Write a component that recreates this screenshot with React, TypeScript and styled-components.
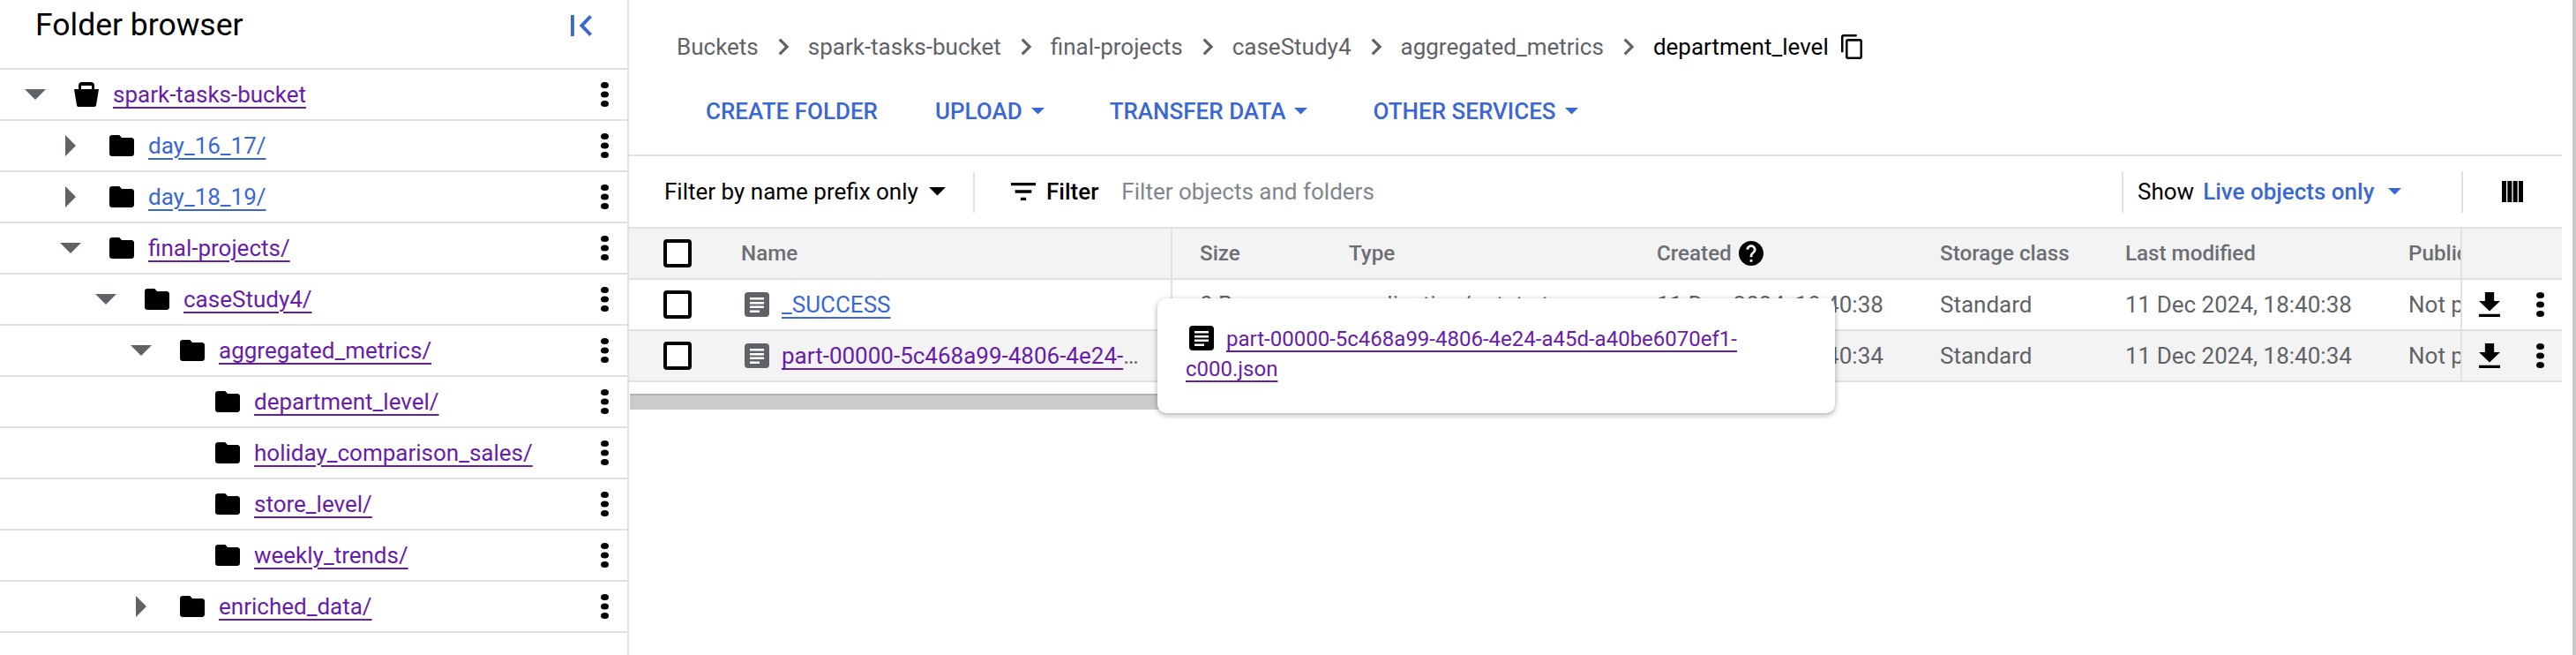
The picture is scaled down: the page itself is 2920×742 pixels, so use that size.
import React from 'react';
import styled, { createGlobalStyle } from 'styled-components';

const PURPLE = '#681da8';
const BLUE = '#3b67d3';
const GREY = '#5f6368';
const LINE = '#e0e0e0';
const COLUMNS = '127px 487px 202px 349px 321px 210px 321px 59px 115px';

const GlobalStyle = createGlobalStyle`
  html, body {
    margin: 0;
    padding: 0;
    height: 100%;
    overflow: hidden;
    background: #fff;
    font-family: Roboto, "Liberation Sans", sans-serif;
    font-size: 26px;
  }
  #root {
    height: 100%;
  }
`;

const Page = styled.div`
  display: flex;
  height: 742px;
  width: 2920px;
  overflow: hidden;
`;

const Sidebar = styled.aside`
  width: 713px;
  flex: none;
  box-sizing: border-box;
  border-right: 2px solid ${LINE};
`;

const SidebarHeader = styled.div`
  height: 79px;
  box-sizing: border-box;
  border-bottom: 2px solid ${LINE};
  display: flex;
  justify-content: space-between;
  padding: 8px 40px 0 40px;
`;

const SidebarTitle = styled.h2`
  margin: 0;
  font-size: 35.5px;
  font-weight: 400;
  line-height: 40px;
  color: #000;
`;

const CollapseIcon = styled.svg`
  margin-top: 9px;
`;

const TreeRow = styled.div<{ $level: number }>`
  height: 58px;
  box-sizing: border-box;
  border-bottom: 2px solid ${LINE};
  display: flex;
  align-items: center;
  padding: 0 21px 0 ${(p) => 28 + p.$level * 40}px;
`;

const Expander = styled.span`
  width: 56px;
  flex: none;
  display: flex;
`;

const ExpanderBox = styled.span`
  width: 24px;
  height: 24px;
  display: flex;
  align-items: center;
  justify-content: center;
`;

const TreeLabel = styled.div`
  flex: 1;
  margin-left: 16px;
  display: flex;
  min-width: 0;
`;

const TextLink = styled.a<{ $visited?: boolean }>`
  color: ${(p) => (p.$visited ? PURPLE : BLUE)};
  text-decoration: underline;
  text-decoration-thickness: 2px;
  text-underline-offset: 5px;
  line-height: 34px;
`;

const Main = styled.main`
  position: relative;
  flex: 1;
  min-width: 0;
  padding-right: 12px;
  box-sizing: border-box;
  border-right: 4px solid #c8c8c8;
`;

const Breadcrumb = styled.nav`
  height: 106px;
  padding-left: 54px;
  display: flex;
  align-items: center;
  color: ${GREY};
`;

const Chevron = styled.span`
  width: 56px;
  flex: none;
  display: flex;
  justify-content: center;
`;

const CurrentCrumb = styled.span`
  color: #000;
`;

const CopyButton = styled.span`
  display: flex;
  margin-left: 14px;
`;

const Toolbar = styled.div`
  height: 71px;
  box-sizing: border-box;
  padding: 0 0 30px 87px;
  display: flex;
  align-items: center;
  gap: 65px;
  border-bottom: 2px solid ${LINE};
`;

const ToolButton = styled.span<{ $menu?: boolean }>`
  display: flex;
  align-items: center;
  color: ${BLUE};
  font-weight: 500;
  gap: 10px;
  padding-right: ${(p) => (p.$menu ? 9 : 0)}px;
`;

const FilterRow = styled.div`
  height: 80px;
  padding-right: 44px;
  display: flex;
  align-items: center;
`;

const PrefixSelect = styled.div`
  width: 390px;
  flex: none;
  box-sizing: border-box;
  padding-left: 40px;
  display: flex;
  align-items: center;
  gap: 12px;
  color: #000;
`;

const Divider = styled.span`
  width: 2px;
  height: 47px;
  flex: none;
  background: ${LINE};
`;

const FilterButton = styled.span`
  display: flex;
  align-items: center;
  gap: 12px;
  margin-left: 41px;
  font-weight: 500;
  color: #000;
`;

const FilterPlaceholder = styled.span`
  flex: 1;
  margin-left: 26px;
  color: #80868b;
`;

const ShowSelect = styled.div`
  width: 383px;
  flex: none;
  box-sizing: border-box;
  padding-left: 16px;
  display: flex;
  align-items: center;
  color: #000;
`;

const ShowValue = styled.span`
  color: ${BLUE};
  font-weight: 500;
  margin: 0 16px 0 10px;
`;

const ColumnsButton = styled.span`
  display: flex;
  margin-left: 44px;
`;

const Table = styled.div`
  border-top: 2px solid ${LINE};
  color: ${GREY};
`;

const Row = styled.div<{ $shaded?: boolean }>`
  display: grid;
  grid-template-columns: ${COLUMNS};
  height: 58px;
  box-sizing: border-box;
  border-bottom: 2px solid ${LINE};
  background: ${(p) => (p.$shaded ? '#f3f3f3' : '#fff')};
`;

const Cell = styled.div<{ $divided?: boolean; $pad?: number }>`
  display: flex;
  align-items: center;
  min-width: 0;
  overflow: hidden;
  white-space: nowrap;
  box-sizing: border-box;
  padding-left: ${(p) => p.$pad ?? 0}px;
  border-left: ${(p) => (p.$divided ? `2px solid ${LINE}` : 'none')};
`;

const HeaderCell = styled(Cell)`
  font-weight: 500;
  color: #6b6f73;
  font-size: 24.2px;
  gap: 8px;
`;

const NameCell = styled(Cell)`
  padding-left: 4px;
  padding-right: 31px;
  gap: 14px;

  svg {
    flex: none;
  }
`;

const Truncated = styled.span`
  overflow: hidden;
  text-overflow: ellipsis;
  white-space: nowrap;
  line-height: 36px;
  color: ${GREY};
`;

const ActionCell = styled(Cell)`
  border-left: 2px solid ${LINE};
  padding-left: 19px;
  gap: 41px;
`;

const Check = styled.span`
  width: 32px;
  height: 32px;
  box-sizing: border-box;
  border: 4px solid #000;
  border-radius: 4px;
  background: #fff;
  margin-left: 39px;
`;

const Scrollbar = styled.div`
  width: 700px;
  height: 18px;
  margin: 13px 0 0 1px;
  box-sizing: border-box;
  background: #cbcbcb;
  border-top: 2px solid #b4b4b4;
`;

const Tooltip = styled.div`
  position: absolute;
  left: 599px;
  top: 338px;
  width: 768px;
  height: 130px;
  box-sizing: border-box;
  padding: 29px 32px;
  background: #fff;
  border-radius: 10px;
  box-shadow: 0 2px 6px rgba(60, 64, 67, 0.45);
  font-size: 24px;
  line-height: 34px;
`;

const TooltipIcon = styled.span`
  display: inline-block;
  vertical-align: -5px;
  margin: 0 14px 0 4px;
  line-height: 0;
`;

const ArrowDown = ({ size = 24, color = GREY }: { size?: number; color?: string }) => (
  <svg width={size} height={size / 2} viewBox="0 0 10 5" fill={color}>
    <path d="M0 0h10L5 5z" />
  </svg>
);

const ArrowRight = () => (
  <svg width="12" height="24" viewBox="0 0 5 10" preserveAspectRatio="none" fill={GREY}>
    <path d="M0 0l5 5-5 5z" />
  </svg>
);

const Kebab = () => (
  <svg width="9" height="28" viewBox="0 0 9 28" fill="#000">
    <ellipse cx="4.5" cy="3.5" rx="4.5" ry="3.5" />
    <ellipse cx="4.5" cy="14" rx="4.5" ry="3.5" />
    <ellipse cx="4.5" cy="24.5" rx="4.5" ry="3.5" />
  </svg>
);

const FolderIcon = () => (
  <svg width="28" height="24" viewBox="2 4 20 16" preserveAspectRatio="none" fill="#000">
    <path d="M10 4H4c-1.1 0-1.99.9-1.99 2L2 18c0 1.1.9 2 2 2h16c1.1 0 2-.9 2-2V8c0-1.1-.9-2-2-2h-8l-2-2z" />
  </svg>
);

const BucketIcon = () => (
  <svg width="28" height="28" viewBox="0 0 28 28" fill="#000">
    <path
      fillRule="evenodd"
      d="M5 8V4a4 4 0 0 1 4-4h10a4 4 0 0 1 4 4v4h5L25 26a2 2 0 0 1-2 2H5a2 2 0 0 1-2-2L0 8zM8 8h12V5a1 1 0 0 0-1-1H9a1 1 0 0 0-1 1z"
    />
  </svg>
);

const FileIcon = ({ color = GREY }: { color?: string }) => (
  <svg width="28" height="28" viewBox="0 0 28 28">
    <rect width="28" height="28" rx="4" fill={color} />
    <path d="M6 6h16v2.400H6zM6 11h16v2.400H6zM6 15.500h16v2.400H6zM6 20.500h11v2.400H6z" fill="#fff" />
  </svg>
);

const ChevronIcon = () => (
  <svg width="38" height="38" viewBox="0 0 24 24" fill={GREY}>
    <path d="M10 6L8.590 7.410 13.170 12l-4.580 4.590L10 18l6-6z" />
  </svg>
);

const BlueCaret = () => <ArrowDown size={15} color={BLUE} />;

const treeRows = [
  { level: 0, state: 'open', icon: 'bucket', name: 'spark-tasks-bucket', visited: true },
  { level: 1, state: 'closed', icon: 'folder', name: 'day_16_17/', visited: false },
  { level: 1, state: 'closed', icon: 'folder', name: 'day_18_19/', visited: false },
  { level: 1, state: 'open', icon: 'folder', name: 'final-projects/', visited: true },
  { level: 2, state: 'open', icon: 'folder', name: 'caseStudy4/', visited: true },
  { level: 3, state: 'open', icon: 'folder', name: 'aggregated_metrics/', visited: true },
  { level: 4, state: 'none', icon: 'folder', name: 'department_level/', visited: true },
  { level: 4, state: 'none', icon: 'folder', name: 'holiday_comparison_sales/', visited: true },
  { level: 4, state: 'none', icon: 'folder', name: 'store_level/', visited: true },
  { level: 4, state: 'none', icon: 'folder', name: 'weekly_trends/', visited: true },
  { level: 3, state: 'closed', icon: 'folder', name: 'enriched_data/', visited: true },
];

const crumbs = ['Buckets', 'spark-tasks-bucket', 'final-projects', 'caseStudy4', 'aggregated_metrics'];

const files = [
  {
    name: '_SUCCESS',
    visited: false,
    created: '11 Dec 2024, 18:40:38',
    modified: '11 Dec 2024, 18:40:38',
  },
  {
    name: 'part-00000-5c468a99-4806-4e24-a45d-a40be6070ef1-c000.json',
    visited: true,
    created: '11 Dec 2024, 18:40:34',
    modified: '11 Dec 2024, 18:40:34',
  },
];

const App: React.FC = () => {
  return (
    <Page>
      <GlobalStyle />
      <Sidebar>
        <SidebarHeader>
          <SidebarTitle>Folder browser</SidebarTitle>
          <CollapseIcon width="24" height="24" viewBox="6 6 12.41 12" preserveAspectRatio="none" fill={BLUE}>
            <path d="M18.410 16.590L13.820 12l4.590-4.590L17 6l-6 6 6 6zM6 6h2v12H6z" />
          </CollapseIcon>
        </SidebarHeader>
        {treeRows.map((row) => (
          <TreeRow key={row.name} $level={row.level}>
            <Expander>
              <ExpanderBox>
                {row.state === 'open' && <ArrowDown />}
                {row.state === 'closed' && <ArrowRight />}
              </ExpanderBox>
            </Expander>
            {row.icon === 'bucket' ? <BucketIcon /> : <FolderIcon />}
            <TreeLabel>
              <TextLink $visited={row.visited}>{row.name}</TextLink>
            </TreeLabel>
            <Kebab />
          </TreeRow>
        ))}
      </Sidebar>

      <Main>
        <Breadcrumb>
          {crumbs.map((crumb) => (
            <React.Fragment key={crumb}>
              <span>{crumb}</span>
              <Chevron>
                <ChevronIcon />
              </Chevron>
            </React.Fragment>
          ))}
          <CurrentCrumb>department_level</CurrentCrumb>
          <CopyButton>
            <svg width="24" height="28" viewBox="2 1 19 22" preserveAspectRatio="none" fill="#000">
              <path d="M16 1H4c-1.100 0-2 .9-2 2v14h2V3h12V1zm3 4H8c-1.100 0-2 .9-2 2v14c0 1.100.9 2 2 2h11c1.100 0 2-.9 2-2V7c0-1.100-.9-2-2-2zm0 16H8V7h11v14z" />
            </svg>
          </CopyButton>
        </Breadcrumb>

        <Toolbar>
          <ToolButton>CREATE FOLDER</ToolButton>
          <ToolButton $menu>
            UPLOAD <BlueCaret />
          </ToolButton>
          <ToolButton $menu>
            TRANSFER DATA <BlueCaret />
          </ToolButton>
          <ToolButton $menu>
            OTHER SERVICES <BlueCaret />
          </ToolButton>
        </Toolbar>

        <FilterRow>
          <PrefixSelect>
            Filter by name prefix only
            <ArrowDown size={19} color="#000" />
          </PrefixSelect>
          <Divider />
          <FilterButton>
            <svg width="28" height="20" viewBox="3 6 18 12" preserveAspectRatio="none" fill="#000">
              <path d="M10 18h4v-2h-4v2zM3 6v2h18V6H3zm3 7h12v-2H6v2z" />
            </svg>
            Filter
          </FilterButton>
          <FilterPlaceholder>Filter objects and folders</FilterPlaceholder>
          <Divider />
          <ShowSelect>
            Show
            <ShowValue>Live objects only</ShowValue>
            <BlueCaret />
          </ShowSelect>
          <Divider />
          <ColumnsButton>
            <svg width="24" height="24" viewBox="0 0 24 24" fill="#000">
              <path d="M0 0h5v24H0zM6.330 0h5v24h-5zM12.670 0h5v24h-5zM19 0h5v24h-5z" />
            </svg>
          </ColumnsButton>
        </FilterRow>

        <Table>
          <Row $shaded>
            <Cell><Check /></Cell>
            <HeaderCell>Name</HeaderCell>
            <HeaderCell $divided $pad={31}>Size</HeaderCell>
            <HeaderCell>Type</HeaderCell>
            <HeaderCell>
              Created
              <svg width="28" height="28" viewBox="2 2 20 20" fill="#000">
                <path d="M12 2C6.480 2 2 6.480 2 12s4.480 10 10 10 10-4.480 10-10S17.520 2 12 2zm1 17h-2v-2h2v2zm2.070-7.750l-.9.920C13.450 12.900 13 13.500 13 15h-2v-.5c0-1.100.45-2.100 1.170-2.830l1.240-1.260c.37-.36.59-.86.59-1.410 0-1.100-.9-2-2-2s-2 .9-2 2H8c0-2.210 1.790-4 4-4s4 1.790 4 4c0 .88-.36 1.680-.93 2.250z" />
              </svg>
            </HeaderCell>
            <HeaderCell>Storage class</HeaderCell>
            <HeaderCell>Last modified</HeaderCell>
            <HeaderCell>Public access</HeaderCell>
            <ActionCell />
          </Row>
          {files.map((file, index) => (
            <Row key={file.name} $shaded={index === 1}>
              <Cell><Check /></Cell>
              <NameCell>
                <FileIcon />
                <Truncated>
                  <TextLink $visited={file.visited}>{file.name}</TextLink>
                </Truncated>
              </NameCell>
              <Cell $divided={index === 0} $pad={index === 0 ? 31 : 33}>0 B</Cell>
              <Cell>application/octet-stream</Cell>
              <Cell>{file.created}</Cell>
              <Cell>Standard</Cell>
              <Cell>{file.modified}</Cell>
              <Cell>Not public</Cell>
              <ActionCell>
                <svg width="24" height="28" viewBox="5 3 14 17" preserveAspectRatio="none" fill="#000">
                  <path d="M19 9h-4V3H9v6H5l7 7 7-7zM5 18v2h14v-2H5z" />
                </svg>
                <Kebab />
              </ActionCell>
            </Row>
          ))}
        </Table>
        <Scrollbar />

        <Tooltip>
          <TooltipIcon>
            <FileIcon color="#000" />
          </TooltipIcon>
          <TextLink $visited>part-00000-5c468a99-4806-4e24-a45d-a40be6070ef1-c000.json</TextLink>
        </Tooltip>
      </Main>
    </Page>
  );
};

export default App;
